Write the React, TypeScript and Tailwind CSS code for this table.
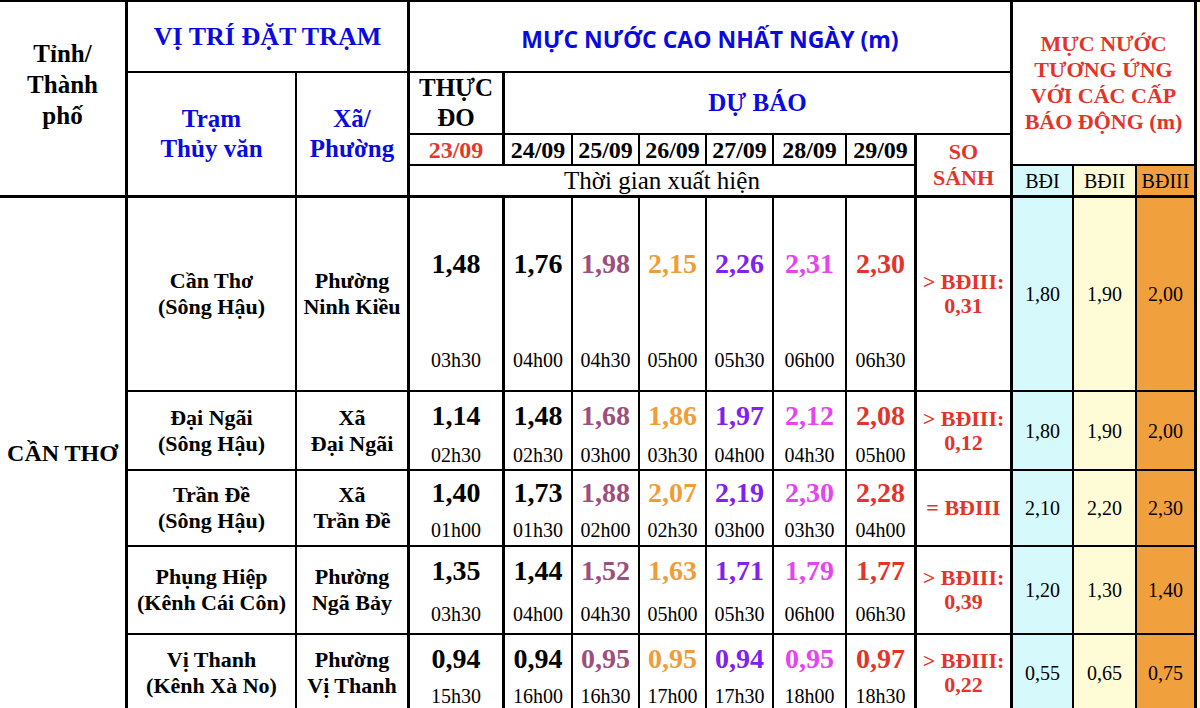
const rows = [
  {
    name: ["Cần Thơ", "(Sông Hậu)"],
    ward: ["Phường", "Ninh Kiều"],
    vals: ["1,48", "1,76", "1,98", "2,15", "2,26", "2,31", "2,30"],
    times: ["03h30", "04h00", "04h30", "05h00", "05h30", "06h00", "06h30"],
    cmp: ["> BĐIII:", "0,31"],
    alarm: ["1,80", "1,90", "2,00"],
  },
  {
    name: ["Đại Ngãi", "(Sông Hậu)"],
    ward: ["Xã", "Đại Ngãi"],
    vals: ["1,14", "1,48", "1,68", "1,86", "1,97", "2,12", "2,08"],
    times: ["02h30", "02h30", "03h00", "03h30", "04h00", "04h30", "05h00"],
    cmp: ["> BĐIII:", "0,12"],
    alarm: ["1,80", "1,90", "2,00"],
  },
  {
    name: ["Trần Đề", "(Sông Hậu)"],
    ward: ["Xã", "Trần Đề"],
    vals: ["1,40", "1,73", "1,88", "2,07", "2,19", "2,30", "2,28"],
    times: ["01h00", "01h30", "02h00", "02h30", "03h00", "03h30", "04h00"],
    cmp: ["= BĐIII"],
    alarm: ["2,10", "2,20", "2,30"],
  },
  {
    name: ["Phụng Hiệp", "(Kênh Cái Côn)"],
    ward: ["Phường", "Ngã Bảy"],
    vals: ["1,35", "1,44", "1,52", "1,63", "1,71", "1,79", "1,77"],
    times: ["03h30", "04h00", "04h30", "05h00", "05h30", "06h00", "06h30"],
    cmp: ["> BĐIII:", "0,39"],
    alarm: ["1,20", "1,30", "1,40"],
  },
  {
    name: ["Vị Thanh", "(Kênh Xà No)"],
    ward: ["Phường", "Vị Thanh"],
    vals: ["0,94", "0,94", "0,95", "0,95", "0,94", "0,95", "0,97"],
    times: ["15h30", "16h00", "16h30", "17h00", "17h30", "18h00", "18h30"],
    cmp: ["> BĐIII:", "0,22"],
    alarm: ["0,55", "0,65", "0,75"],
  },
];

const dates = ["24/09", "25/09", "26/09", "27/09", "28/09"];

// colour of the value per day column (23/09 .. 29/09)
const valColor = [
  "text-black",
  "text-black",
  "text-[#9c4f7d]",
  "text-[#f19d37]",
  "text-[#7f22f0]",
  "text-[#e544ef]",
  "text-[#e3342a]",
];

// right border per day column
const colBorder = [
  "border-r-[3px]",
  "border-r-2",
  "border-r-2",
  "border-r-2",
  "border-r-2",
  "border-r-2",
  "border-r-[3px]",
];

const alarmBg = ["bg-[#d6f9fc] border-r-2", "bg-[#fefcd6] border-r-2", "bg-[#f1a03e] border-r-[3px]"];

const cell = "flex items-center justify-center text-center border-black";

export default function App() {
  return (
    <div className="w-[1200px] h-[708px] overflow-hidden bg-white font-['Liberation_Serif',serif] text-black">
      <div className="grid grid-cols-[128px_169px_113px_95px_68px_67px_67px_67px_73px_70px_96px_61px_63px_60px_1fr] grid-rows-[71px_62px_31px_32px_132px_62px_48px_31px_44px_32px_48px_40px_47px_30px] border-t-2 border-black">
        {/* header row 1 */}
        <div className={`${cell} row-span-4 border-r-[3px] border-b-[3px] pb-7 text-[25px] font-bold leading-[31px]`}>
          Tỉnh/
          <br />
          Thành
          <br />
          phố
        </div>
        <div className={`${cell} col-span-2 border-r-[3px] border-b-2 text-[26px] font-bold text-[#0a0ae0]`}>
          VỊ TRÍ ĐẶT TRẠM
        </div>
        <div className={`${cell} col-span-8 border-r-[3px] border-b-2 pt-1.5 font-['Open_Sans',sans-serif] text-[23px] font-bold text-[#0a0ae0]`}>
          MỰC NƯỚC CAO NHẤT NGÀY (m)
        </div>
        <div className={`${cell} col-span-3 row-span-3 border-r-[3px] border-b-2 text-[22px] font-bold leading-[26px] text-[#e3342a]`}>
          MỰC NƯỚC
          <br />
          TƯƠNG ỨNG
          <br />
          VỚI CÁC CẤP
          <br />
          BÁO ĐỘNG (m)
        </div>
        <div className="row-span-14 bg-[#fcfad0]" />

        {/* header row 2 */}
        <div className={`${cell} row-span-3 border-r-2 border-b-[3px] text-[25px] font-bold leading-[30px] text-[#0a0ae0]`}>
          Trạm
          <br />
          Thủy văn
        </div>
        <div className={`${cell} row-span-3 border-r-[3px] border-b-[3px] text-[25px] font-bold leading-[30px] text-[#0a0ae0]`}>
          Xã/
          <br />
          Phường
        </div>
        <div className={`${cell} border-r-[3px] border-b-2 text-[25px] font-bold leading-[30px]`}>
          THỰC
          <br />
          ĐO
        </div>
        <div className={`${cell} col-span-7 border-r-[3px] border-b-2 text-[25px] font-bold text-[#0a0ae0]`}>
          DỰ BÁO
        </div>

        {/* header row 3 */}
        <div className={`${cell} border-r-[3px] border-b-2 text-[24px] font-bold text-[#e5382c]`}>23/09</div>
        {dates.map((d) => (
          <div key={d} className={`${cell} border-r-2 border-b-2 text-[24px] font-bold`}>
            {d}
          </div>
        ))}
        <div className={`${cell} border-r-[3px] border-b-2 text-[24px] font-bold`}>29/09</div>
        <div className={`${cell} row-span-2 border-r-[3px] border-b-[3px] text-[22px] font-bold leading-[26px] text-[#e3342a]`}>
          SO
          <br />
          SÁNH
        </div>

        {/* header row 4 */}
        <div className={`${cell} col-span-7 border-r-[3px] border-b-[3px] text-[25px] leading-none`}>
          Thời gian xuất hiện
        </div>
        <div className={`${cell} border-b-[3px] bg-[#d6f9fc] border-r-2 text-[20px]`}>BĐI</div>
        <div className={`${cell} border-b-[3px] bg-[#fefcd6] border-r-2 text-[20px]`}>BĐII</div>
        <div className={`${cell} border-b-[3px] bg-[#f1a03e] border-r-[3px] text-[20px]`}>BĐIII</div>

        {/* data */}
        {rows.map((r, ri) => (
          <div key={ri} className="contents">
            {ri === 0 && (
              <div className={`${cell} row-span-10 border-r-[3px] pb-1 text-[24px] font-bold`}>CẦN THƠ</div>
            )}
            <div className={`${cell} row-span-2 border-r-2 border-b-2 text-[22px] font-bold leading-[26px]`}>
              {r.name[0]}
              <br />
              {r.name[1]}
            </div>
            <div className={`${cell} row-span-2 border-r-[3px] border-b-2 text-[22px] font-bold leading-[26px]`}>
              {r.ward[0]}
              <br />
              {r.ward[1]}
            </div>
            {r.vals.map((v, i) => (
              <div key={i} className={`${cell} ${colBorder[i]} ${valColor[i]} text-[28px] font-bold`}>
                {v}
              </div>
            ))}
            <div className={`${cell} row-span-2 border-r-[3px] border-b-2 text-[22px] font-bold leading-[24px] text-[#e3342a]`}>
              {r.cmp.length > 1 ? (
                <span>
                  {r.cmp[0]}
                  <br />
                  {r.cmp[1]}
                </span>
              ) : (
                r.cmp[0]
              )}
            </div>
            {r.alarm.map((a, i) => (
              <div key={i} className={`${cell} row-span-2 border-b-2 ${alarmBg[i]} text-[20px]`}>
                {a}
              </div>
            ))}
            {r.times.map((t, i) => (
              <div key={i} className={`${cell} ${colBorder[i]} border-b-2 text-[20px]`}>
                {t}
              </div>
            ))}
          </div>
        ))}
      </div>
    </div>
  );
}
